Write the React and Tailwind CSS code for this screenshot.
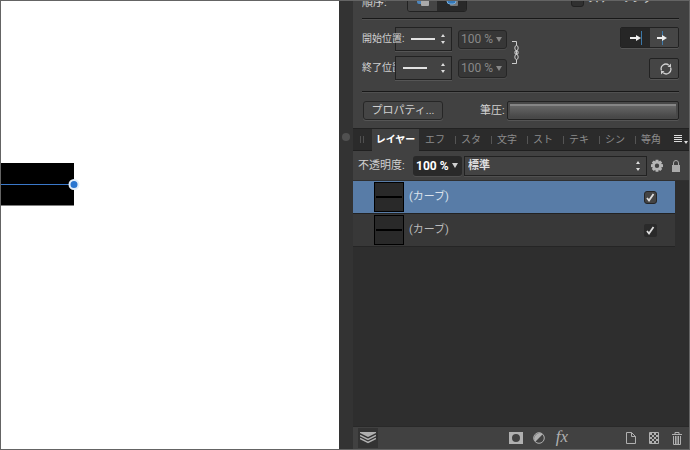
import React from 'react';

const tabs = ['エフ', 'スタ', '文字', 'スト', 'テキ', 'シン', '等角'];

function Stepper() {
  return (
    <svg className="h-3 w-2 shrink-0" viewBox="0 0 8 12" fill="#ddd" aria-hidden="true">
      <path d="M4 1l2 3H2zM4 11l2-3H2z" />
    </svg>
  );
}

function Caret({ className }) {
  return (
    <svg className={className} width="6" height="5" viewBox="0 0 6 5" fill="currentColor" aria-hidden="true">
      <path d="M0 0h6L3 5z" />
    </svg>
  );
}

function Divider() {
  return <hr className="h-[2px] border-0 border-t border-b border-t-[#181818] border-b-[#505050]" />;
}

function LineStyle({ label, shift }) {
  return (
    <button
      type="button"
      aria-label={label}
      className="relative flex h-6 w-[57px] shrink-0 items-center justify-between border border-[#222] bg-[#434343] pr-1 shadow-[0_1px_0_#555]"
    >
      <span className={shift ? 'ml-[15px] h-[2px] w-6 bg-[#e2e2e2]' : 'ml-[7px] h-[2px] w-6 bg-[#e2e2e2]'} />
      <Stepper />
    </button>
  );
}

function DisabledPercent({ label }) {
  return (
    <div className="ml-[6px] flex h-[19px] w-[49px] items-center rounded-[3px] border border-[#262626] bg-[#373737] pr-1 pl-[2px] text-[#888] shadow-[0_1px_0_#4c4c4c]">
      <input aria-label={label} disabled defaultValue="100 %" className="w-9 min-w-0 bg-transparent text-[12px] leading-4" />
      <Caret className="ml-auto shrink-0" />
    </div>
  );
}

function StrokePanel() {
  return (
    <section className="border-b border-[#222] bg-[#414141] pr-[10px] pl-[9px]">
      <div className="flex h-[17px] items-end overflow-hidden pb-[6px]">
        <span className="mb-px w-[45px] text-[11px] leading-4">順序:</span>
        <div className="flex h-5 w-[60px] overflow-hidden rounded-b-[3px] border border-[#222]">
          <button type="button" aria-label="背面に描画" className="flex w-1/2 items-end justify-center bg-[#454545] pb-1">
            <svg width="14" height="14" viewBox="0 0 14 14" aria-hidden="true">
              <rect x="1" width="8" height="11" rx="2" fill="#4d86bd" />
              <rect x="5" y="6" width="8" height="7" rx="1" fill="#aaa" />
            </svg>
          </button>
          <button type="button" aria-label="前面に描画" className="flex w-1/2 items-end justify-center bg-[#292929] pb-1">
            <svg width="14" height="14" viewBox="0 0 14 14" aria-hidden="true">
              <rect x="5" y="5" width="8" height="8" rx="1" fill="#777" />
              <rect x="2" y="1" width="9" height="10" rx="3" fill="#3478b8" stroke="#77aede" />
            </svg>
          </button>
        </div>
        <label className="mb-[5px] ml-auto flex h-4 w-[108px] items-end gap-1 text-[11px] leading-4">
          <input type="checkbox" className="size-[13px] appearance-none rounded-[3px] border border-[#222] bg-[#303030]" />
          スケーリング
        </label>
      </div>
      <Divider />
      <div className="flex pt-[7px] pb-[11px]">
        <div className="flex flex-col gap-[5px]">
          <div className="flex h-6 items-center">
            <span className="relative z-10 w-[33px] text-[10px] leading-4 whitespace-nowrap">開始位置:</span>
            <LineStyle label="開始位置" shift />
            <DisabledPercent label="開始位置の倍率" />
          </div>
          <div className="flex h-6 items-center">
            <span className="w-[33px] text-[10px] leading-4 whitespace-nowrap">終了位置</span>
            <LineStyle label="終了位置" />
            <DisabledPercent label="終了位置の倍率" />
          </div>
        </div>
        <svg className="mt-[14px] ml-1" width="9" height="24" viewBox="0 0 9 24" fill="none" stroke="#ccc" aria-hidden="true">
          <path d="M1 .5h4.500v4M1 22.500h4.500v-4" />
          <ellipse cx="5.500" cy="7" rx="1.700" ry="2.500" />
          <path d="M5.500 9v5" strokeWidth="1.500" />
          <ellipse cx="5.500" cy="16" rx="1.700" ry="2.500" />
          <ellipse cx="5.500" cy="11.500" rx="1.700" ry="2" />
        </svg>
        <div className="ml-auto flex flex-col items-end gap-[10px]">
          <div className="flex h-[21px] w-[59px] overflow-hidden rounded-[2px] border border-[#222] shadow-[0_1px_0_#555]">
            <button type="button" aria-label="線の端に矢印を配置" className="flex w-1/2 items-center justify-center bg-[#262626]">
              <svg width="16" height="14" viewBox="0 0 16 14" aria-hidden="true">
                <path d="M14.500 0v14" stroke="#3c78a8" />
                <path d="M3 7h7" stroke="#eee" strokeWidth="2" />
                <path d="M9 4l5 3-5 3z" fill="#eee" />
              </svg>
            </button>
            <button type="button" aria-label="線の先に矢印を配置" className="flex w-1/2 items-center justify-center bg-[#464646]">
              <svg width="16" height="14" viewBox="0 0 16 14" aria-hidden="true">
                <path d="M6.500 0v14" stroke="#3c78a8" />
                <path d="M1 7h6" stroke="#eee" strokeWidth="2" />
                <path d="M6 4l5 3-5 3z" fill="#eee" />
              </svg>
            </button>
          </div>
          <button type="button" aria-label="矢印を入れ替え" className="flex h-[21px] w-[30px] items-center justify-center rounded-[2px] border border-[#222] bg-[#454545] pl-1 shadow-[0_1px_0_#555]">
            <svg width="12" height="12" viewBox="0 0 12 12" fill="none" stroke="#d0d0d0" strokeWidth="1.300" aria-hidden="true">
              <path d="M1.500 7.500A4.600 4.600 0 0 1 8.800 2.300M10.500 4.500A4.600 4.600 0 0 1 3.200 9.700" />
              <path d="M7.500 4H11V.5zM4.500 8H1v3.500z" fill="#d0d0d0" stroke="none" />
            </svg>
          </button>
        </div>
      </div>
      <Divider />
      <div className="flex items-center pt-2 pb-2">
        <button type="button" className="ml-px h-[19px] w-20 rounded-[3px] border border-[#262626] bg-[#454545] text-[11px] leading-4 shadow-[0_1px_0_#555]">
          プロパティ...
        </button>
        <span className="ml-[37px] w-[27px] text-[11px] leading-4 whitespace-nowrap">筆圧:</span>
        <button
          type="button"
          aria-label="筆圧"
          className="h-[19px] min-w-0 flex-1 rounded-[2px] border border-[#222] bg-[#484848] p-[2px] shadow-[0_1px_0_#555]"
        >
          <span className="block h-full border-t-2 border-[#858585] bg-linear-to-b from-[#666] to-[#484848]" />
        </button>
      </div>
    </section>
  );
}

function TabBar() {
  return (
    <div role="tablist" className="flex h-[22px] items-stretch border-b border-[#202020] bg-[#2b2b2b] text-[10px] leading-4 text-[#8b8b8b]">
      <span className="my-[7px] ml-[7px] w-1 border-x border-[#505050]" />
      <button type="button" role="tab" aria-selected="true" className="-mb-px ml-2 w-[47px] bg-[#414141] font-bold whitespace-nowrap text-white">
        レイヤー
      </button>
      {tabs.map((tab, i) => (
        <button key={tab} type="button" role="tab" aria-selected="false" className="flex min-w-0 flex-1 items-center whitespace-nowrap">
          <span className={i === 0 ? 'h-2 w-px' : 'h-2 w-px bg-[#555]'} />
          <span className="ml-[5px]">{tab}</span>
        </button>
      ))}
      <button type="button" aria-label="パネルメニュー" className="ml-[3px] w-[15px] shrink-0">
        <svg width="14" height="10" viewBox="0 0 14 10" fill="#ddd" aria-hidden="true">
          <path d="M0 0h8v1H0zM0 2h8v1H0zM0 4h8v1H0zM0 6h8v1H0zM10 6h4l-2 3z" />
        </svg>
      </button>
    </div>
  );
}

function BlendRow() {
  return (
    <div className="flex h-[30px] items-center border-b border-[#303030] bg-[#414141] pr-[9px] pl-[5px]">
      <label htmlFor="opacity" className="w-[55px] text-[11px] leading-4 whitespace-nowrap">不透明度:</label>
      <div className="flex h-5 w-[49px] items-center rounded-[3px] bg-[#292929] pr-1 pl-[3px] shadow-[0_1px_0_#505050]">
        <input id="opacity" defaultValue="100 %" className="w-9 min-w-0 bg-transparent text-[12px] leading-4 font-bold text-white" />
        <Caret className="ml-auto shrink-0" />
      </div>
      <div className="ml-[2px] flex h-5 min-w-0 flex-1 items-center border border-[#222] bg-[#434343] pr-1 shadow-[0_1px_0_#505050]">
        <select aria-label="描画モード" className="h-full min-w-0 flex-1 appearance-none bg-transparent pl-[3px] text-[11px] leading-4 font-bold text-[#ddd]">
          <option>標準</option>
        </select>
        <Stepper />
      </div>
      <button type="button" aria-label="詳細設定" className="ml-[3px]">
        <svg width="14" height="14" viewBox="0 0 14 14" fill="#b5b5b5" aria-hidden="true">
          <path fillRule="evenodd" d="M5.600.8h2.800l.3 1.800 1.500-1.100 2 2-1.100 1.500 1.900.3v2.800l-1.900.3 1.100 1.500-2 2-1.500-1.100-.3 1.900H5.600l-.3-1.900-1.500 1.100-2-2 1.100-1.500L1 8.100V5.300L2.900 5 1.800 3.500l2-2 1.500 1.100zM7 4.500a2.200 2.200 0 1 0 0 4.400 2.200 2.200 0 0 0 0-4.400z" />
        </svg>
      </button>
      <button type="button" aria-label="ロック" className="ml-2">
        <svg width="8" height="12" viewBox="0 0 8 12" aria-hidden="true">
          <path d="M1.500 6V3a2.500 2.500 0 0 1 5 0v3" fill="none" stroke="#aaa" />
          <path d="M0 5h8v7H0z" fill="#aaa" />
        </svg>
      </button>
    </div>
  );
}

function Layer({ selected }) {
  return (
    <li className={selected
      ? 'flex h-[33px] items-center border-b border-[#222] bg-[#587ca7] pr-[18px] pl-[21px] text-[#dbe2ec]'
      : 'flex h-[33px] items-center border-b border-[#252525] bg-[#383838] pr-[18px] pl-[21px] text-[#bbb]'}
    >
      <span className="flex size-[30px] items-center border border-black bg-[#292929] px-px">
        <span className="h-[2px] w-full bg-black" />
      </span>
      <span className="ml-[5px] text-[11px] leading-4">(カーブ)</span>
      <label className={selected
        ? 'ml-auto flex size-[13px] items-center justify-center rounded-[3px] border border-[#252525] bg-[#444]'
        : 'ml-auto flex size-[13px] items-center justify-center rounded-[2px] bg-[#2a2a2a]'}
      >
        <input type="checkbox" aria-label="レイヤーを表示" defaultChecked className="peer absolute size-3 appearance-none" />
        <svg className="invisible peer-checked:visible" width="9" height="9" viewBox="0 0 9 9" fill="none" stroke="#ddd" strokeWidth="1.800" aria-hidden="true">
          <path d="M1 5l2 2.500L7.500 1" />
        </svg>
      </label>
    </li>
  );
}

function Footer() {
  return (
    <footer className="flex h-[23px] shrink-0 items-center border-t border-[#292929] bg-[#414141] pr-[7px] pl-[5px] text-[#b0b0b0]">
      <button type="button" aria-label="レイヤー一覧" className="flex h-5 w-5 items-center justify-center bg-[#333]">
        <svg width="16" height="12" viewBox="0 0 16 12" aria-hidden="true">
          <path d="M0 0h16v1L8 5 0 1z" fill="#b0b0b0" />
          <path d="M0 3.500l8 4 8-4M0 6.500l8 4 8-4" fill="none" stroke="#b0b0b0" strokeWidth="1.500" />
        </svg>
      </button>
      <div className="ml-auto flex items-center gap-[10px]">
        <button type="button" aria-label="マスクレイヤー">
          <svg width="14" height="12" viewBox="0 0 14 12" fill="#b0b0b0" aria-hidden="true">
            <path fillRule="evenodd" d="M0 0h14v12H0zM7 2a4 4 0 1 0 0 8 4 4 0 0 0 0-8z" />
          </svg>
        </button>
        <button type="button" aria-label="調整">
          <svg width="12" height="12" viewBox="0 0 12 12" aria-hidden="true">
            <circle cx="6" cy="6" r="5.300" fill="none" stroke="#b0b0b0" />
            <path d="M9.700 2.300a5.300 5.300 0 0 0-7.400 7.400z" fill="#b0b0b0" />
          </svg>
        </button>
        <button type="button" aria-label="レイヤー効果" className="-mt-[3px] w-[14px] font-['Liberation_Serif',serif] text-[17px] leading-4 italic">fx</button>
      </div>
      <div className="ml-[57px] flex items-center gap-[13px]">
        <button type="button" aria-label="レイヤーを追加">
          <svg width="10" height="12" viewBox="0 0 10 12" fill="none" stroke="#b0b0b0" aria-hidden="true">
            <path d="M.5.5h5l4 4v7h-9zM5.500.5v4h4" />
          </svg>
        </button>
        <button type="button" aria-label="ピクセルレイヤーを追加">
          <svg width="10" height="12" viewBox="0 0 10 12" aria-hidden="true">
            <path d="M.5.5h9v11h-9z" fill="none" stroke="#b0b0b0" />
            <path d="M1 1h2v2H1zM5 1h2v2H5zM3 3h2v2H3zM7 3h2v2H7zM1 5h2v2H1zM5 5h2v2H5zM3 7h2v2H3zM7 7h2v2H7zM1 9h2v2H1zM5 9h2v2H5z" fill="#b0b0b0" />
          </svg>
        </button>
        <button type="button" aria-label="削除">
          <svg width="10" height="13" viewBox="0 0 10 13" fill="none" stroke="#b0b0b0" aria-hidden="true">
            <path d="M0 2.500h10M3 2V.5h4V2M1.500 4v8.500h7V4M3.500 4v8M5 4v8M6.500 4v8" />
          </svg>
        </button>
      </div>
    </footer>
  );
}

export default function App() {
  return (
    <div className="flex h-screen overflow-hidden border border-[#646464] bg-[#333] font-[Roboto,'Noto_Sans_CJK_JP',sans-serif] text-[#d0d0d0]">
      <main className="relative min-w-0 flex-1 overflow-hidden bg-white">
        <svg className="absolute top-[162px] left-0" width="80" height="44" viewBox="0 0 80 44" aria-hidden="true">
          <path d="M0 0h73v42.500H0z" fill="#000" />
          <path d="M0 21.500h72" stroke="#3a78c9" />
          <circle cx="73" cy="21.500" r="4.500" fill="#2875d0" stroke="#e1edfa" strokeWidth="2" />
        </svg>
      </main>
      <div className="flex w-[14px] shrink-0 justify-center pt-[132px]">
        <span className="size-2 rounded-full bg-[#505050]" />
      </div>
      <aside className="flex w-[336px] shrink-0 flex-col bg-[#2e2e2e]">
        <StrokePanel />
        <TabBar />
        <BlendRow />
        <ul className="min-h-0 flex-1 pr-[14px]">
          <Layer selected />
          <Layer />
        </ul>
        <Footer />
      </aside>
    </div>
  );
}
